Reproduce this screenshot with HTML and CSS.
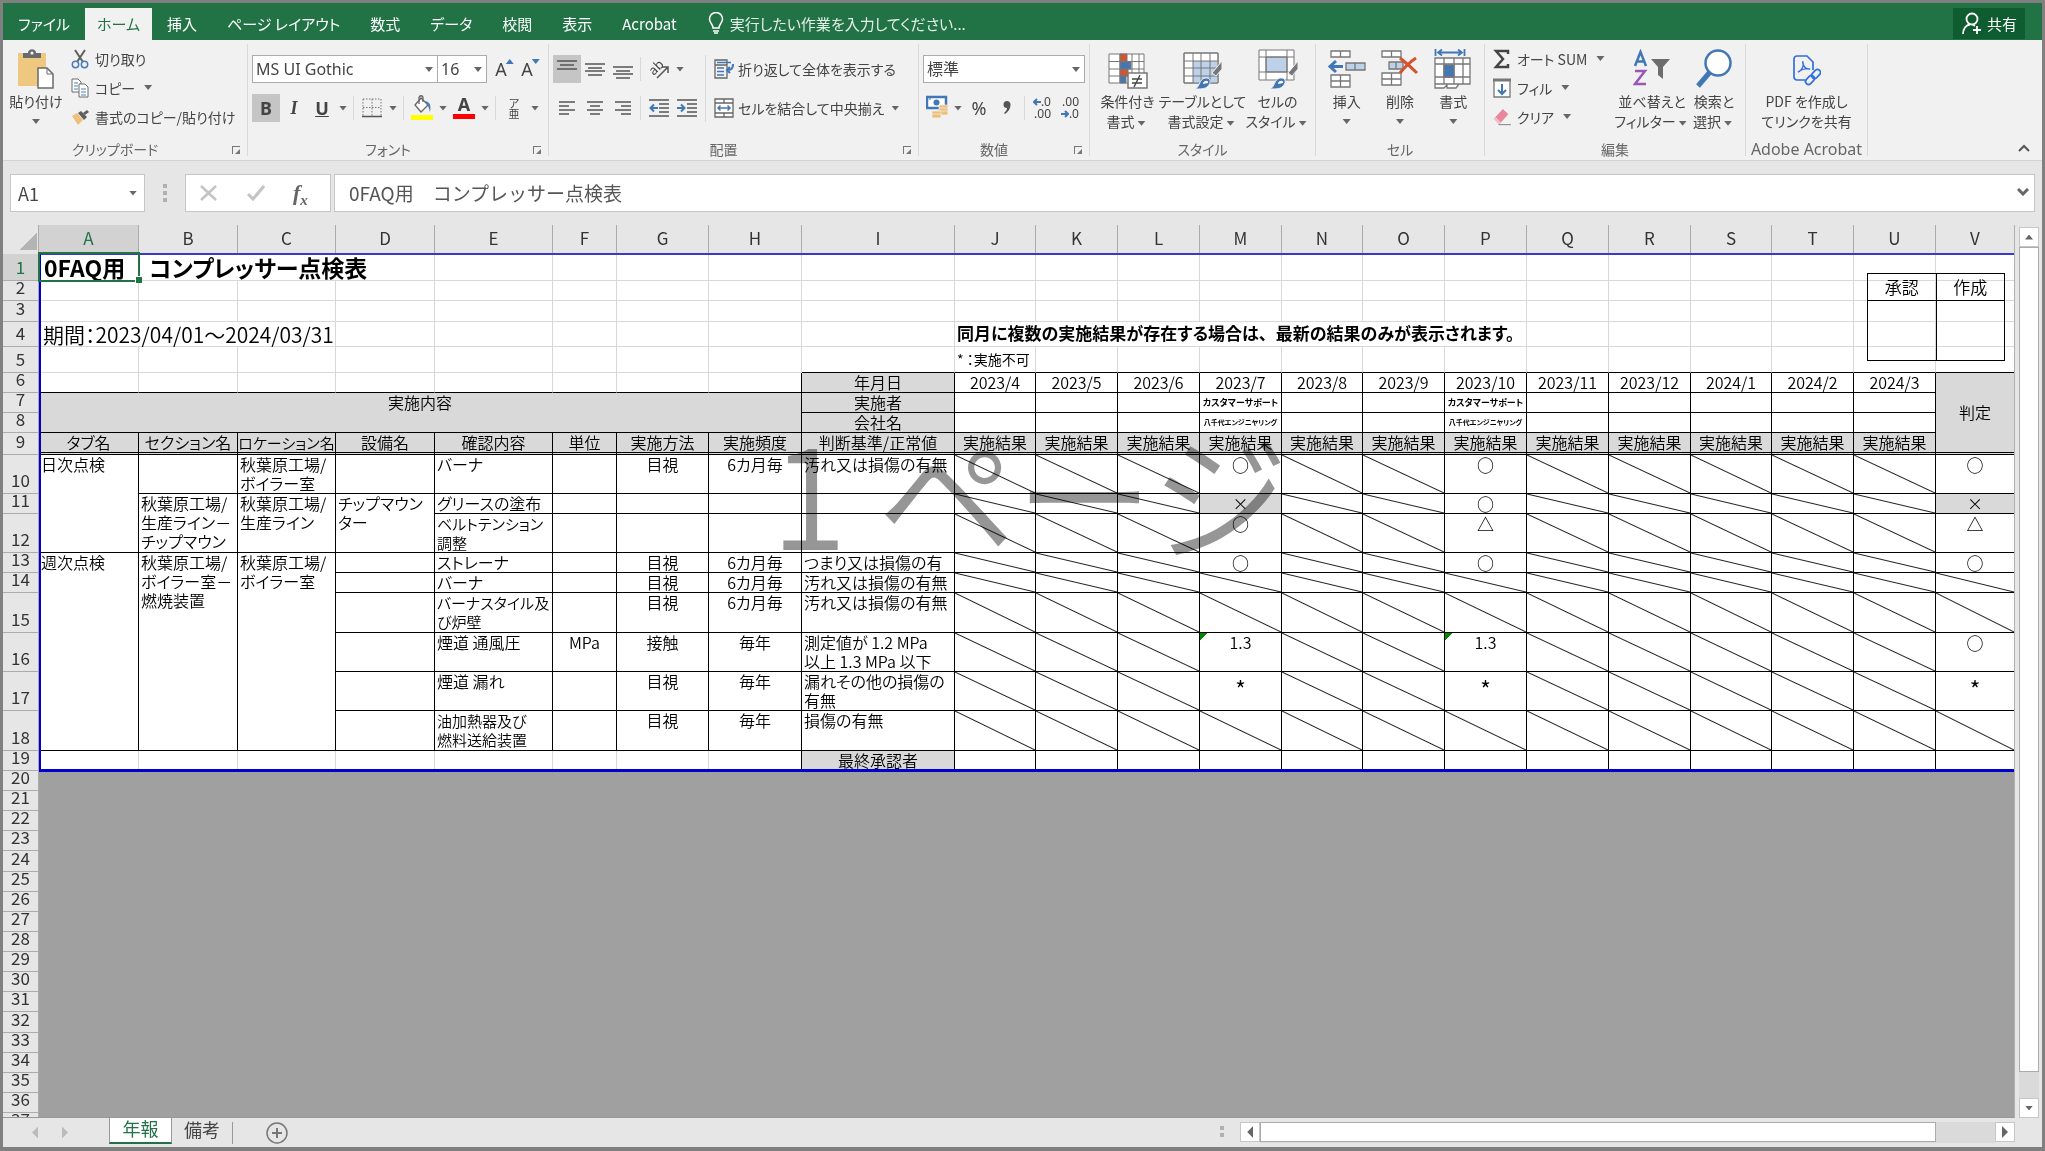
FILE: index.html
```html
<!DOCTYPE html>
<html>
<head>
    <meta charset="UTF-8">
    <meta name="viewport" content="width=device-width, initial-scale=1.0">
    <title>コンプレッサー点検表</title>
    <link rel="stylesheet" href="styles.css">
</head>
<body>
    <nav class="tabs">
        <button class="tab file">ファイル</button>
        <button class="tab active">ホーム</button>
        <button class="tab">挿入</button>
        <button class="tab">ページ レイアウト</button>
        <button class="tab">数式</button>
        <button class="tab">データ</button>
        <button class="tab">校閲</button>
        <button class="tab">表示</button>
        <button class="tab">Acrobat</button>
        <label class="tell">
            <svg width="16" height="22" viewBox="0 0 16 22" fill="none" stroke="#fff" stroke-width="1.5"><path d="M5 16c0-4-3.500-5-3.500-9a6.500 6.500 0 0 1 13 0c0 4-3.500 5-3.500 9z"/><path d="M5 19h6M6 21h4"/></svg>
            <input type="text" placeholder="実行したい作業を入力してください...">
        </label>
        <button class="share">
            <svg width="22" height="24" viewBox="0 0 22 24" fill="none" stroke="#fff" stroke-width="1.800"><circle cx="11" cy="7" r="5.500"/><path d="M2 22c0-5 3-9 7-9.500M12 12.500l2 1.500M16 14v8M12 18h8"/></svg>
            共有
        </button>
    </nav>

    <div class="ribbon">
        <section class="group clipboard">
            <div class="body">
                <button class="big">
                    <svg width="38" height="40" viewBox="0 0 38 40"><path d="M1 4h28v33H1z" fill="#edc87e"/><path d="M6 9V4h5c0-5 8-5 8 0h5v5z" fill="#6a6a6a"/><circle cx="15" cy="4" r="1.500" fill="#fff"/><path d="M21 19h9l6 6v14H21z" fill="#fff" stroke="#6a6a6a" stroke-width="1.500"/><path d="M30 19v6h6" fill="none" stroke="#6a6a6a"/></svg>
                    <span>貼り付け</span><i class="down"></i>
                </button>
                <div class="smalls">
                    <button class="small"><svg width="18" height="20" viewBox="0 0 18 20" fill="none"><path d="M4 1l8 12M14 1L6 13" stroke="#5e5e5e" stroke-width="2"/><circle cx="4.500" cy="15.500" r="3.200" stroke="#4a7ebb" stroke-width="1.500"/><circle cx="13.500" cy="15.500" r="3.200" stroke="#4a7ebb" stroke-width="1.500"/></svg>切り取り</button>
                    <button class="small"><svg width="18" height="20" viewBox="0 0 18 20" fill="#fff" stroke="#6a6a6a"><path d="M1 1h6l3 3v10H1z"/><path d="M8 6h6l3 3v10H8z"/><path d="M3 5h4M3 8h4M3 11h4M10 11h5M10 14h5M10 17h5" stroke="#4a7ebb"/></svg>コピー<i class="down"></i></button>
                    <button class="small"><svg width="18" height="16" viewBox="0 0 18 16"><path d="M1 7l5-3 6 7-5 5z" fill="#edc17a"/><path d="M7 4l3-2 6 6-3 3z" fill="#5e5e5e"/><path d="M12 4l4-3 2 2-4 3z" fill="#5e5e5e"/></svg>書式のコピー/貼り付け</button>
                </div>
            </div>
            <div class="caption wide">クリップボード<i class="launch"></i></div>
        </section>

        <section class="group font">
            <div class="body rows">
                <div class="row">
                    <span class="combo name"><select aria-label="フォント名"><option>MS UI Gothic</option></select></span>
                    <span class="combo size"><select aria-label="サイズ"><option>16</option></select></span>
                    <button class="tool grow">A<i class="up"></i></button>
                    <button class="tool grow">A<i class="down"></i></button>
                </div>
                <div class="row">
                    <button class="tool on bold">B</button>
                    <button class="tool italic">I</button>
                    <button class="tool under">U</button>
                    <i class="down"></i>
                    <span class="bar"></span>
                    <button class="tool" aria-label="罫線"><svg width="20" height="20" viewBox="0 0 20 20"><path d="M1 1h18M1 1v17M19 1v17M10 1v17M1 9.500h18" stroke="#777" stroke-dasharray="1.500 1.500" fill="none"/><path d="M0 18.500h20" stroke="#555" stroke-width="1.500"/></svg></button>
                    <i class="down"></i>
                    <span class="bar"></span>
                    <button class="tool" aria-label="塗りつぶし"><svg width="22" height="26" viewBox="0 -2 22 26"><path d="M10 1l7 7-7 7-6-7z" fill="#fff" stroke="#666" stroke-width="1.300"/><path d="M8 7V1c0-3 4-3 4 0v4" fill="none" stroke="#666" stroke-width="1.300"/><path d="M14 4c6 1 6 6 5 11-1-3-1-5-3-7z" fill="#4a7ebb"/><path d="M0 18h22v5H0z" fill="#ff0"/></svg></button>
                    <i class="down"></i>
                    <button class="tool color">A</button>
                    <i class="down"></i>
                    <span class="bar"></span>
                    <button class="tool ruby"><span>ア</span><span>亜</span></button>
                    <i class="down"></i>
                </div>
            </div>
            <div class="caption wide">フォント<i class="launch"></i></div>
        </section>

        <section class="group align">
            <div class="body">
                <div class="rows">
                    <div class="row">
                        <button class="tool on" aria-label="上揃え"><svg width="20" height="20" viewBox="0 0 20 20" stroke="#555" stroke-width="1.400"><path d="M0 2h20M3 6h14M0 10h20"/></svg></button>
                        <button class="tool" aria-label="上下中央揃え"><svg width="20" height="20" viewBox="0 0 20 20" stroke="#555" stroke-width="1.400"><path d="M0 5h20M3 9h14M0 12h20M3 16h14"/></svg></button>
                        <button class="tool" aria-label="下揃え"><svg width="20" height="20" viewBox="0 0 20 20" stroke="#555" stroke-width="1.400"><path d="M0 8h20M3 12h14M0 15h20M3 19h14"/></svg></button>
                        <span class="bar"></span>
                        <button class="tool angle" aria-label="方向"><span>ab</span><svg width="20" height="20" viewBox="0 0 20 20" fill="none" stroke="#555" stroke-width="1.500"><path d="M8 19L19 8M13 8h6v6"/></svg></button>
                        <i class="down"></i>
                    </div>
                    <div class="row">
                        <button class="tool" aria-label="左揃え"><svg width="16" height="14" viewBox="0 0 16 14" stroke="#555" stroke-width="1.400"><path d="M0 1h16M0 5h10M0 9h16M0 13h10"/></svg></button>
                        <button class="tool" aria-label="中央揃え"><svg width="16" height="14" viewBox="0 0 16 14" stroke="#555" stroke-width="1.400"><path d="M0 1h16M3 5h10M0 9h16M3 13h10"/></svg></button>
                        <button class="tool" aria-label="右揃え"><svg width="16" height="14" viewBox="0 0 16 14" stroke="#555" stroke-width="1.400"><path d="M0 1h16M6 5h10M0 9h16M6 13h10"/></svg></button>
                        <span class="bar"></span>
                        <button class="tool" aria-label="インデントを減らす"><svg width="20" height="18" viewBox="0 0 20 18" fill="none" stroke="#555" stroke-width="1.400"><path d="M0 1h20M10 5h10M10 9h10M10 13h10M0 17h20"/><path d="M9 9H2M5 5.500L1.500 9 5 12.500" stroke="#4177b5" stroke-width="2"/></svg></button>
                        <button class="tool" aria-label="インデントを増やす"><svg width="20" height="18" viewBox="0 0 20 18" fill="none" stroke="#555" stroke-width="1.400"><path d="M0 1h20M10 5h10M10 9h10M10 13h10M0 17h20"/><path d="M0 9h7M4 5.500L7.500 9 4 12.500" stroke="#4177b5" stroke-width="2"/></svg></button>
                    </div>
                </div>
                <div class="rows wrapping">
                    <button class="small"><svg width="20" height="20" viewBox="0 0 20 20" fill="none" stroke="#666" stroke-width="1.300"><path d="M1 1h12v18H1zM1 6h12"/><path d="M3 3.500h14M3 9h7M3 12.500h7M3 16h7" stroke="#4177b5"/><path d="M19 5c0 6-3 6-6 6M16 8l-3 3 3 3" stroke="#4177b5" stroke-width="2"/></svg>折り返して全体を表示する</button>
                    <button class="small"><svg width="20" height="20" viewBox="0 0 20 20" fill="#fff" stroke="#666" stroke-width="1.300"><path d="M1 1h18v18H1zM1 5h18M1 15h18M10 1v4M10 15v4"/><path d="M4 10h12M6.500 7.500L4 10l2.500 2.500M13.500 7.500L16 10l-2.500 2.500" fill="none" stroke="#4177b5" stroke-width="1.500"/></svg>セルを結合して中央揃え<i class="down"></i></button>
                </div>
            </div>
            <div class="caption wide">配置<i class="launch"></i></div>
        </section>

        <section class="group number">
            <div class="body rows">
                <div class="row">
                    <span class="combo format"><select aria-label="表示形式"><option>標準</option></select></span>
                </div>
                <div class="row">
                    <button class="tool" aria-label="通貨"><svg width="22" height="26" viewBox="0 0 22 26"><path d="M1 2h19v11H1z" fill="#fff" stroke="#4177b5" stroke-width="2.500"/><circle cx="10.500" cy="7.500" r="3" fill="#4177b5"/><path d="M3 4h2M16 11h2" stroke="#4177b5"/><g fill="#edc07a" stroke="#f1f1f1" stroke-width=".7"><rect x="13" y="10" width="9" height="4" rx="1"/><rect x="13" y="13" width="9" height="4" rx="1"/><rect x="13" y="16" width="9" height="4" rx="1"/><rect x="6" y="16" width="9" height="4" rx="1"/><rect x="6" y="19" width="9" height="4" rx="1"/></g></svg></button>
                    <i class="down"></i>
                    <button class="tool">%</button>
                    <button class="tool" aria-label="桁区切り"><svg width="8" height="14" viewBox="0 0 8 14"><path d="M4 0a3.500 3.500 0 0 1 3.500 4C7.500 8 5 11 2 13l-1-1c2-2 3-3 3-5a3.500 3.500 0 0 1 0-7z" fill="#555"/></svg></button>
                    <span class="bar"></span>
                    <button class="tool dec"><span><svg width="8" height="8" viewBox="0 0 8 8" fill="none" stroke="#4177b5" stroke-width="2"><path d="M8 4H2M4 1L1 4l3 3"/></svg>.0</span><span>.00</span></button>
                    <button class="tool dec"><span>.00</span><span><svg width="8" height="8" viewBox="0 0 8 8" fill="none" stroke="#4177b5" stroke-width="2"><path d="M0 4h6M4 1l3 3-3 3"/></svg>.0</span></button>
                </div>
            </div>
            <div class="caption wide">数値<i class="launch"></i></div>
        </section>

        <section class="group style">
            <div class="body">
                <button class="big">
                    <svg width="40" height="40" viewBox="0 0 40 40" stroke="#777" fill="#fff"><path d="M1 5h35v29H1z"/><path d="M12 5h7v8h-7zM12 20h8v7h-8z" fill="#d6532f"/><path d="M12 13h11v7H12zM12 27h6v7h-6z" fill="#4177b5"/><path d="M1 12.500h35M1 20h35M1 27h35M12 5v29M24 5v29M31 5v29" fill="none"/><path d="M20 24h19v15H20z" stroke-width="1.500"/><path d="M24 30h10M24 34h10M32 26l-6 12" stroke="#444" stroke-width="1.400"/></svg>
                    <span>条件付き</span><span>書式<i class="down"></i></span>
                </button>
                <button class="big">
                    <svg width="40" height="40" viewBox="0 0 40 40" stroke="#777" fill="#fff"><path d="M1 4h34v30H1z"/><path d="M10 12h25v22H10z" fill="#bdd1e9" stroke="none"/><path d="M1 12h34M1 19h34M1 27h34M10 4v30M18 4v30M27 4v30M1 4h34v30H1z" fill="none"/><path d="M39 12v8l-6 7-4-3z" fill="#777" stroke="#f1f1f1"/><path d="M12 40c5-2 4-10 10-11 6-1 7 5 2 9-2 2-7 2-12 2z" fill="#4177b5" stroke="#f1f1f1"/><path d="M20 35c0-4 6-4 5-1" fill="#fff" stroke="none"/></svg>
                    <span>テーブルとして</span><span>書式設定<i class="down"></i></span>
                </button>
                <button class="big">
                    <svg width="40" height="40" viewBox="0 0 40 40" stroke="#777" fill="#fff"><path d="M1 1h35v30H1z"/><path d="M8 8h21v15H8z" fill="#bdd1e9"/><path d="M1 8h35M1 23h35M8 1v30M29 1v30" fill="none"/><path d="M40 12v8l-6 7-4-3z" fill="#777" stroke="#f1f1f1"/><path d="M12 40c5-2 4-10 10-11 6-1 7 5 2 9-2 2-7 2-12 2z" fill="#4177b5" stroke="#f1f1f1"/><path d="M20 35c0-4 6-4 5-1" fill="#fff" stroke="none"/></svg>
                    <span>セルの</span><span>スタイル<i class="down"></i></span>
                </button>
            </div>
            <div class="caption">スタイル</div>
        </section>

        <section class="group cells">
            <div class="body">
                <button class="big">
                    <svg width="38" height="40" viewBox="0 0 38 40" fill="#fff" stroke="#777" stroke-width="1.300"><path d="M3 2h19v6H3zM12.500 2v6M3 26h19v12H3zM3 32h19M12.500 26v12"/><path d="M18 14h19v7H18zM27 14v7" fill="#bdd1e9"/><path d="M15 17.500H3M8 12l-6 5.500 6 5.500" fill="none" stroke="#4177b5" stroke-width="3"/></svg>
                    <span>挿入</span><i class="down"></i>
                </button>
                <button class="big">
                    <svg width="38" height="40" viewBox="0 0 38 40" fill="#fff" stroke="#777" stroke-width="1.300"><path d="M1 2h19v6H1zM10.500 2v6M1 24h19v12H1zM1 30h19M10.500 24v12"/><path d="M8 13h14v7H8zM15 13v7" fill="#bdd1e9"/><path d="M19 9c5 4 12 10 17 15M35 9c-6 4-12 10-16 15" fill="none" stroke="#d6532f" stroke-width="3"/></svg>
                    <span>削除</span><i class="down"></i>
                </button>
                <button class="big">
                    <svg width="38" height="40" viewBox="0 0 38 40" fill="#fff" stroke="#777" stroke-width="1.300"><path d="M1 9h35v26H1zM1 15h35M1 28h35M10 9v26M20 9v26M29 9v26M1 35v4h9l3-3v3h9l3-4"/><path d="M10 16h10v12H10z" fill="#4177b5"/><path d="M1.500 0v7M30.500 0v7M5 3.500h22M8 .5l-4 3 4 3M24 .5l4 3-4 3" fill="none" stroke="#4177b5" stroke-width="1.800"/></svg>
                    <span>書式</span><i class="down"></i>
                </button>
            </div>
            <div class="caption">セル</div>
        </section>

        <section class="group edit">
            <div class="body">
                <div class="smalls">
                    <button class="small"><svg width="18" height="20" viewBox="0 0 18 20" fill="none" stroke="#444" stroke-width="2.500"><path d="M15 5V2H3l7 8-7 8h12v-3"/></svg>オート SUM<i class="down"></i></button>
                    <button class="small"><svg width="18" height="20" viewBox="0 0 18 20" fill="#fff" stroke="#777" stroke-width="1.300"><path d="M1 2h16v17H1z"/><path d="M0 2h18" stroke-width="3"/><path d="M9 6v10M5 12l4 4 4-4" fill="none" stroke="#4177b5" stroke-width="2"/></svg>フィル<i class="down"></i></button>
                    <button class="small"><svg width="18" height="20" viewBox="0 0 20 20"><path d="M1 12L11 1l6 6L7 18z" fill="#e8879b"/><path d="M1 12l6 6 2-2-6-6z" fill="#f4bdc8"/><path d="M6 18.500h14" stroke="#777"/></svg>クリア<i class="down"></i></button>
                </div>
                <button class="big">
                    <svg width="38" height="40" viewBox="0 0 38 40" fill="none"><path d="M2 17L7.500 3 13 17M4 12.500h7" stroke="#4177b5" stroke-width="2.500"/><path d="M2 22h10L2 35h11" stroke="#9a57b8" stroke-width="2.500"/><path d="M18 10h19l-7 8v12l-5-4v-8z" fill="#6d6d6d"/></svg>
                    <span>並べ替えと</span><span>フィルター<i class="down"></i></span>
                </button>
                <button class="big">
                    <svg width="38" height="40" viewBox="0 0 38 40"><path d="M3 37l12-14" stroke="#4177b5" stroke-width="5"/><circle cx="23" cy="14" r="12.500" fill="#fff" stroke="#4177b5" stroke-width="2.500"/></svg>
                    <span>検索と</span><span>選択<i class="down"></i></span>
                </button>
            </div>
            <div class="caption">編集</div>
        </section>

        <section class="group adobe">
            <div class="body">
                <button class="big">
                    <svg width="28" height="40" viewBox="0 0 28 40" fill="none" stroke="#2f6fde" stroke-width="1.700"><path d="M12 31H4a3 3 0 0 1-3-3V10a3 3 0 0 1 3-3h10l6 6v8"/><path d="M5 23c4-1 6-7 5-10-1-2 0 8 7 7-4-1-8 0-12 3z" stroke-width="1.300"/><rect x="18" y="22" width="10" height="6" rx="3" transform="rotate(-45 23 25)"/><rect x="12" y="28" width="10" height="6" rx="3" transform="rotate(-45 17 31)"/></svg>
                    <span>PDF を作成し</span><span>てリンクを共有</span>
                </button>
            </div>
            <div class="caption latin">Adobe Acrobat</div>
        </section>
        <button class="fold" aria-label="リボンを折りたたむ"><svg width="12" height="8" viewBox="0 0 12 8" fill="none" stroke="#555" stroke-width="2"><path d="M1 7l5-5 5 5"/></svg></button>
    </div>

    <div class="formula">
        <div class="box ref"><input type="text" value="A1" aria-label="名前ボックス"><i class="down"></i></div>
        <span class="dots"></span>
        <div class="box fx">
            <svg width="18" height="16" viewBox="0 0 18 16" stroke="#c3c3c3" stroke-width="2.500"><path d="M1 1l15 14M16 1L1 15"/></svg>
            <svg width="18" height="16" viewBox="0 0 18 16" fill="none" stroke="#c3c3c3" stroke-width="3"><path d="M1 9l5 5L17 1"/></svg>
            <span>f<sub>x</sub></span>
        </div>
        <div class="box text">
            <input type="text" value="0FAQ用　コンプレッサー点検表" aria-label="数式バー">
            <svg width="12" height="8" viewBox="0 0 12 8" fill="none" stroke="#666" stroke-width="3"><path d="M1 1l5 5 5-5"/></svg>
        </div>
    </div>

    <main class="main">
        <div class="sheet">
            <table id="grid"></table>
            <div class="page"></div>
            <div class="mark">1 ページ</div>
            <div class="cursor"></div>
            <table class="stamp">
                <tr><th>承認</th><th>作成</th></tr>
                <tr><td></td><td></td></tr>
            </table>
        </div>
        <div class="vscroll">
            <button aria-label="上"><i class="up"></i></button>
            <div class="track"><div class="thumb"></div></div>
            <button aria-label="下"><i class="down"></i></button>
        </div>
    </main>

    <footer class="foot">
        <div class="nav"><i class="prev"></i><i class="next"></i></div>
        <button class="leaf active">年報</button>
        <button class="leaf">備考</button>
        <button class="add" aria-label="新しいシート"><svg width="22" height="22" viewBox="0 0 22 22" fill="none" stroke="#777"><circle cx="11" cy="11" r="10" stroke-width="1.500"/><path d="M11 6v10M6 11h10" stroke-width="2"/></svg></button>
        <span class="dots"></span>
        <div class="hscroll">
            <button aria-label="左"><i class="prev"></i></button>
            <div class="track"><div class="thumb"></div></div>
            <button aria-label="右"><i class="next"></i></button>
        </div>
    </footer>

    <script>
        const grid = document.querySelector('#grid')
        const cols = 'ABCDEFGHIJKLMNOPQRSTUV'.split('')
        const widths = [100, 99, 98, 99, 118, 64, 92, 93, 153, 81, 82, 82, 82, 81, 82, 82, 82, 82, 81, 82, 82, 79]
        const heights = [27, 20, 21, 25, 26, 20, 20, 20, 22, 39, 20, 39, 20, 20, 40, 39, 39, 40, 20]
        const months = ['2023/4', '2023/5', '2023/6', '2023/7', '2023/8', '2023/9', '2023/10', '2023/11', '2023/12', '2024/1', '2024/2', '2024/3']

        function td(text = '', cls = '', span = '') {
            return `<td class="${cls}" ${span}>${text}</td>`
        }
        function blank(n, cls = '') {
            return td('', cls).repeat(n)
        }
        function resultClass(v) {
            if (v == '') return 'k slash'
            if (v == '×') return 'k c gray'
            if (v == '*') return 'k c star'
            if (v == '1.3') return 'k c warn'
            return 'k c sign'
        }
        // 月ごとの結果セル (結果がない月は斜線)
        function result(jul, oct, judge) {
            let tag = ''
            months.forEach((m, i) => {
                const v = i == 3 ? jul : i == 6 ? oct : ''
                tag += td(v, resultClass(v))
            })
            return tag + td(judge, resultClass(judge))
        }
        function work(d, e, f, g, h, i) {
            return (d === null ? '' : td(d, 'k')) + td(e, e.length > 10 ? 'k fit' : 'k') + td(f, 'k c') + td(g, 'k c') + td(h, 'k c') + td(i, 'k')
        }
        function person(text, cls) {
            return months.map((m, i) => td(i == 3 || i == 6 ? text : '', 'k c ' + cls)).join('')
        }

        const place = '秋葉原工場/<br>'
        const rows = [
            td('<span>0FAQ用</span><span>コンプレッサー点検表</span>', 'title', 'colspan="4"') + blank(18),
            blank(22),
            blank(22),
            td('期間：2023/04/01～2024/03/31', 'period', 'colspan="3"') + blank(6) + td('同月に複数の実施結果が存在する場合は<span>、</span>最新の結果のみが表示されます。', 'notice', 'colspan="7"') + blank(6),
            blank(8) + td('', 'kb') + td('* ：実施不可', 'note kb') + blank(12, 'kb'),
            blank(7, 'kb') + td('', 'k') + td('年月日', 'k c gray') + months.map(m => td(m, 'k c')).join('') + td('判定', 'k c gray judge', 'rowspan="4"'),
            td('実施内容', 'k c gray', 'colspan="8" rowspan="2"') + td('実施者', 'k c gray') + person('カスタマーサポート', 'tiny'),
            td('会社名', 'k c gray') + person('八千代エンジニヤリング', 'tiny company'),
            ['タブ名', 'セクション名', 'ロケーション名', '設備名', '確認内容', '単位', '実施方法', '実施頻度', '判断基準/正常値'].map(t => td(t, t.length == 7 ? 'k c gray fit' : 'k c gray')).join('') + months.map(() => td('実施結果', 'k c gray')).join(''),
            td('日次点検', 'k', 'rowspan="3"') + td('', 'k') + td(place + 'ボイラー室', 'k') + work('', 'バーナ', '', '目視', '6カ月毎', '汚れ又は損傷の有無') + result('○', '○', '○'),
            td(place + '生産ライン－<br>チップマウン', 'k', 'rowspan="2"') + td(place + '生産ライン', 'k', 'rowspan="2"') + td('チップマウン<br>ター', 'k', 'rowspan="2"') + work(null, 'グリースの塗布', '', '', '', '') + result('×', '○', '×'),
            work(null, 'ベルトテンション<br>調整', '', '', '', '') + result('○', '△', '△'),
            td('週次点検', 'k', 'rowspan="6"') + td(place + 'ボイラー室－<br>燃焼装置', 'k', 'rowspan="6"') + td(place + 'ボイラー室', 'k', 'rowspan="6"') + work('', 'ストレーナ', '', '目視', '6カ月毎', 'つまり又は損傷の有') + result('○', '○', '○'),
            work('', 'バーナ', '', '目視', '6カ月毎', '汚れ又は損傷の有無') + result('', '', ''),
            work('', 'バーナスタイル及<br>び炉壁', '', '目視', '6カ月毎', '汚れ又は損傷の有無') + result('', '', ''),
            work('', '煙道 通風圧', 'MPa', '接触', '毎年', '測定値が 1.2 MPa<br>以上 1.3 MPa 以下') + result('1.3', '1.3', '○'),
            work('', '煙道 漏れ', '', '目視', '毎年', '漏れその他の損傷の<br>有無') + result('*', '*', '*'),
            work('', '油加熱器及び<br>燃料送給装置', '', '目視', '毎年', '損傷の有無') + result('', '', ''),
            blank(7) + td('', 'kr') + td('最終承認者', 'k c gray') + blank(13, 'k')
        ]

        function load() {
            let tag = '<colgroup><col style="width:36px">'
            widths.forEach(w => tag += `<col style="width:${w}px">`)
            tag += '</colgroup><tr class="head"><th class="corner"></th>'
            cols.forEach((c, i) => tag += `<th class="${i == 0 ? 'sel' : ''}">${c}</th>`)
            tag += '</tr>'
            // 20行目以降は印刷範囲外
            for (let n = 1; n <= 37; n++) {
                const h = heights[n - 1] || (n % 8 == 0 ? 21 : 20)
                tag += `<tr class="r${n}" style="height:${h}px"><th class="num ${n == 1 ? 'sel' : ''}"><div>${n}</div></th>`
                if (n < 20) tag += rows[n - 1]
                if (n == 20) tag += '<td class="outside" colspan="22" rowspan="18"></td>'
                tag += '</tr>'
            }
            grid.innerHTML = tag
        }
        load()
    </script>
</body>
</html>
```
FILE: styles.css
```css
* {
    box-sizing: border-box;
}
body {
    margin: 0;
    height: 100vh;
    display: flex;
    flex-direction: column;
    overflow: hidden;
    border: 3px solid #808080;
    border-bottom-width: 4px;
    background: #e6e6e6;
    color: #444;
    font-family: "Noto Sans CJK JP", sans-serif;
    font-size: 14px;
    font-feature-settings: "palt";
}
button, input, select {
    font: inherit;
    font-feature-settings: inherit;
    color: inherit;
    border: 0;
    padding: 0;
    background: none;
    outline: none;
}
button {
    white-space: nowrap;
}
i {
    flex: none;
    display: inline-block;
    font-style: normal;
}

/* 三角マーク */
.down, .up {
    width: 14px;
    height: 5px;
    background: #666;
    clip-path: polygon(3px 0, 11px 0, 7px 5px);
}
.up {
    clip-path: polygon(3px 5px, 11px 5px, 7px 0);
}
.prev, .next {
    width: 6px;
    height: 12px;
    background: #666;
    clip-path: polygon(100% 0, 100% 100%, 0 50%);
}
.next {
    clip-path: polygon(0 0, 0 100%, 100% 50%);
}

/* タブ */
.tabs {
    flex: none;
    height: 37px;
    display: flex;
    align-items: flex-end;
    background: #217346;
    color: #fff;
    font-size: 15px;
}
.tab {
    height: 32px;
    padding: 0 15px 2px;
}
.tab.file {
    width: 82px;
    padding: 0 0 2px;
}
.tab.active {
    width: 67px;
    padding: 0 0 2px;
    background: #f1f1f1;
    color: #217346;
}
.tell {
    display: flex;
    align-items: center;
    height: 32px;
    margin-left: 16px;
    padding-bottom: 2px;
    gap: 6px;
}
.tell input {
    width: 300px;
}
.tell input::placeholder {
    color: #e4efe8;
    opacity: 1;
}
.share {
    display: flex;
    align-items: center;
    justify-content: center;
    gap: 4px;
    width: 72px;
    height: 31px;
    margin: 0 17px 1px auto;
    background: #0e5c2f;
}

/* リボン */
.ribbon {
    flex: none;
    display: flex;
    height: 121px;
    padding: 4px 0;
    background: #f1f1f1;
    border-bottom: 1px solid #d2d2d2;
}
.group {
    flex: none;
    display: flex;
    flex-direction: column;
    border-right: 1px solid #d8d8d8;
}
.clipboard { width: 245px; }
.font { width: 301px; }
.align { width: 370px; }
.number { width: 171px; }
.style { width: 226px; }
.cells { width: 169px; }
.edit { width: 261px; }
.adobe { width: 122px; }
.body {
    flex: 1;
    display: flex;
}
.caption {
    position: relative;
    line-height: 14px;
    font-size: 14px;
    text-align: center;
    color: #666;
}
.caption.wide {
    padding-right: 20px;
}
.caption.latin {
    font-family: "Noto Sans", sans-serif;
    font-size: 16px;
}
.launch {
    position: absolute;
    right: 7px;
    bottom: 2px;
    width: 8px;
    height: 8px;
    border-left: 1px solid #777;
    border-top: 1px solid #777;
}
.launch::after {
    content: "";
    position: absolute;
    right: 0;
    bottom: 0;
    width: 5px;
    height: 5px;
    background: #777;
    clip-path: polygon(100% 0, 100% 100%, 0 100%);
}
.big {
    flex: 1;
    min-width: 0;
    display: flex;
    flex-direction: column;
    align-items: center;
    padding-top: 5px;
    line-height: 20px;
}
.big svg {
    flex: none;
    margin-bottom: 2px;
}
.big > .down {
    margin-top: 8px;
}
.big span .down {
    vertical-align: middle;
}
.clipboard .big {
    flex: none;
    width: 66px;
}
.cells .body {
    padding: 0 4px;
}
.smalls {
    display: flex;
    flex-direction: column;
    padding-left: 2px;
}
.small {
    display: flex;
    align-items: center;
    height: 29px;
    gap: 6px;
}
.edit .smalls {
    width: 136px;
    padding-left: 8px;
}
.rows {
    display: flex;
    flex-direction: column;
    gap: 11px;
    padding: 11px 0 0 4px;
}
.row {
    display: flex;
    align-items: center;
    height: 28px;
}
.align .body {
    gap: 3px;
}
.wrapping {
    margin: 11px 0 20px 1px;
    padding: 0 0 0 8px;
    border-left: 1px solid #d8d8d8;
}
.wrapping .small {
    height: 28px;
    gap: 4px;
}
.tool {
    flex: none;
    display: flex;
    align-items: center;
    justify-content: center;
    width: 28px;
    height: 28px;
    font-family: "Noto Sans", sans-serif;
    font-size: 18px;
}
.tool.on {
    background: #c5c5c5;
}
.bar {
    width: 1px;
    height: 24px;
    margin: 0 4px 0 3px;
    background: #d8d8d8;
}
.combo {
    position: relative;
    height: 28px;
    background: #fff;
    border: 1px solid #ababab;
}
.combo select {
    appearance: none;
    width: 100%;
    height: 100%;
    padding-left: 3px;
    font-family: "Noto Sans", "Noto Sans CJK JP", sans-serif;
    font-size: 16px;
}
.combo::after {
    content: "";
    position: absolute;
    right: 4px;
    top: 11px;
    width: 8px;
    height: 5px;
    background: #666;
    clip-path: polygon(0 0, 100% 0, 50% 100%);
    pointer-events: none;
}
.name { width: 186px; }
.size { width: 50px; margin: 0 6px 0 -1px; }
.format { width: 162px; }
.grow {
    width: 26px;
}
.grow i {
    align-self: flex-start;
    margin: 4px 0 0 -4px;
    background: #4177b5;
}
.bold { font-weight: bold; }
.italic {
    font-family: "Liberation Serif", serif;
    font-style: italic;
    font-weight: bold;
}
.under {
    font-weight: bold;
    text-decoration: underline;
}
.color {
    position: relative;
    align-items: flex-start;
    line-height: 20px;
    font-weight: bold;
}
.color::after {
    content: "";
    position: absolute;
    left: 3px;
    bottom: 3px;
    width: 22px;
    height: 5px;
    background: #f00;
}
.ruby {
    flex-direction: column;
    font-family: "Noto Sans CJK JP", sans-serif;
    font-size: 11px;
    line-height: 10px;
}
.angle {
    position: relative;
    font-size: 13px;
}
.angle span {
    position: absolute;
    left: 3px;
    top: 3px;
    transform: rotate(-45deg);
}
.dec {
    flex-direction: column;
    align-items: flex-end;
    padding-right: 6px;
    font-size: 12px;
    line-height: 12px;
}
.fold {
    align-self: flex-end;
    margin: 0 12px 0 auto;
}

/* 数式バー */
.formula {
    flex: none;
    display: flex;
    height: 64px;
    padding: 13px 7px 13px;
}
.box {
    display: flex;
    align-items: center;
    background: #fff;
    border: 1px solid #c6c6c6;
    font-size: 19px;
    font-feature-settings: normal;
}
.ref {
    width: 135px;
    padding: 0 4px 0 7px;
}
.ref input {
    flex: 1;
    min-width: 0;
    font-size: 18px;
}
.dots {
    width: 4px;
    height: 18px;
    margin: 10px 18px;
    background: repeating-linear-gradient(#b0b0b0 0 4px, transparent 4px 7px);
}
.fx {
    width: 146px;
    justify-content: space-around;
    padding: 0 8px 0 0;
}
.fx span {
    font-family: "Liberation Serif", serif;
    font-style: italic;
    font-weight: bold;
    color: #666;
    font-size: 22px;
    line-height: 24px;
}
.fx sub {
    font-size: 15px;
    line-height: 1px;
}
.text {
    flex: 1;
    margin-left: 3px;
    padding: 0 5px 2px 14px;
}
.text input {
    flex: 1;
    color: #555;
}

/* シート */
.main {
    flex: 1;
    min-height: 0;
    display: flex;
}
.sheet {
    position: relative;
    flex: 1;
    min-width: 0;
    overflow: hidden;
    background: #a0a0a0;
    border-right: 1px solid #b0b0b0;
    border-bottom: 1px solid #999;
}
#grid {
    table-layout: fixed;
    width: 2012px;
    border-spacing: 0;
    background: #fff;
    color: #000;
    font-size: 16px;
    font-weight: 350;
    line-height: 19px;
}
#grid td {
    padding: 0 2px;
    vertical-align: top;
    white-space: nowrap;
    border-right: 1px solid #d8d8d8;
    border-bottom: 1px solid #d8d8d8;
}
#grid td.k {
    border-color: #000;
}
#grid td.kb {
    border-bottom-color: #000;
}
#grid td.kr {
    border-right-color: #000;
}
#grid td.c {
    padding: 0;
    text-align: center;
}
#grid td.fit {
    font-size: 15px;
}
#grid td.gray {
    background: #d9d9d9;
}
#grid td.slash {
    background: linear-gradient(to top right, transparent calc(50% - 1px), #222 50%, transparent calc(50% + 1px));
}
#grid td.warn {
    background: linear-gradient(135deg, #080 5px, transparent 5px);
}
#grid td.sign {
    font-size: 17px;
    font-weight: 500;
}
#grid td.star {
    font-size: 24px;
    line-height: 34px;
}
#grid .r9 td, #grid td.judge {
    border-bottom: 3px double #000;
}
#grid td.judge {
    vertical-align: middle;
}
#grid td.title {
    padding-left: 5px;
    font-size: 23px;
    font-weight: bold;
    line-height: 26px;
}
.title span + span {
    margin-left: 24px;
}
#grid td.period {
    padding-left: 4px;
    font-size: 21px;
    line-height: 24px;
}
#grid td.notice {
    font-size: 17px;
    font-weight: bold;
    line-height: 22px;
}
.notice span {
    font-feature-settings: normal;
}
#grid td.note {
    font-size: 14px;
    font-weight: 400;
    line-height: 25px;
}
#grid td.tiny {
    font-size: 9px;
    font-weight: bold;
}
#grid td.company {
    font-size: 7px;
}
#grid td.outside {
    background: #a0a0a0;
    border: 0;
}
#grid th {
    padding: 0;
    background: #e6e6e6;
    color: #333;
    font-weight: 400;
    border-right: 1px solid #ababab;
}
.head {
    height: 29px;
    line-height: 26px;
    vertical-align: top;
}
.head th {
    font-size: 17px;
}
#grid th.corner {
    background: linear-gradient(135deg, transparent 50%, #b4b4b4 50%) no-repeat 17px 8px / 17px 17px, #e6e6e6;
}
#grid th.num {
    vertical-align: bottom;
    border-bottom: 1px solid #ababab;
    font-size: 17px;
}
.num div {
    height: 19px;
    line-height: 11px;
    overflow: hidden;
}
#grid th.sel {
    background: #d2d2d2;
    color: #217346;
}
.page {
    position: absolute;
    left: 36px;
    top: 28px;
    right: -4px;
    height: 519px;
    border: 2px solid #3a3ac4;
    border-left-color: #0000c8;
    border-bottom: 3px solid #0000d0;
}
.mark {
    position: absolute;
    left: 768px;
    top: 196px;
    font-size: 138px;
    line-height: 138px;
    font-weight: 350;
    font-feature-settings: normal;
    white-space: nowrap;
    color: #969696;
    mix-blend-mode: multiply;
}
.cursor {
    position: absolute;
    left: 35px;
    top: 27px;
    width: 102px;
    height: 30px;
    border: 2px solid #217346;
}
.cursor::after {
    content: "";
    position: absolute;
    right: -4px;
    bottom: -3px;
    width: 6px;
    height: 6px;
    background: #217346;
    border: 1px solid #fff;
    border-width: 1px 0 0 1px;
}
.stamp {
    position: absolute;
    left: 1864px;
    top: 48px;
    width: 138px;
    border-collapse: collapse;
    color: #000;
    font-size: 17px;
    line-height: 26px;
}
.stamp th, .stamp td {
    width: 50%;
    padding: 0;
    font-weight: 350;
    border: 1px solid #000;
}
.stamp td {
    height: 60px;
}

/* スクロールバー */
.vscroll {
    flex: none;
    width: 27px;
    padding: 2px 4px 0;
    display: flex;
    flex-direction: column;
}
.vscroll button, .hscroll button {
    display: flex;
    align-items: center;
    justify-content: center;
    width: 20px;
    height: 20px;
    background: #fff;
    border: 1px solid #c6c6c6;
}
.track {
    flex: 1;
    background: #dadada;
}
.thumb {
    background: #fff;
    border: 1px solid #ababab;
}
.vscroll .track {
    width: 20px;
}
.vscroll .thumb {
    height: 97%;
}

/* シート見出し */
.foot {
    flex: none;
    display: flex;
    height: 29px;
    font-size: 18px;
}
.nav {
    display: flex;
    align-items: center;
    gap: 24px;
    width: 106px;
    padding-left: 29px;
}
.nav i {
    background: #bbb;
}
.leaf {
    width: 60px;
    height: 26px;
    padding-bottom: 4px;
    line-height: 18px;
}
.leaf.active {
    width: 63px;
    background: #fff;
    color: #217346;
    border: 1px solid #999;
    border-width: 0 1px;
    border-bottom: 2px solid #217346;
}
.add {
    margin: 4px 0 3px;
    padding-left: 33px;
    border-left: 1px solid #999;
    line-height: 1px;
}
.foot .dots {
    height: 14px;
    margin: 8px 16px 0 auto;
}
.hscroll {
    flex: none;
    width: 38%;
    display: flex;
    margin: 4px 27px 0 0;
    height: 21px;
}
.hscroll .thumb {
    width: 92%;
    height: 20px;
}
```
